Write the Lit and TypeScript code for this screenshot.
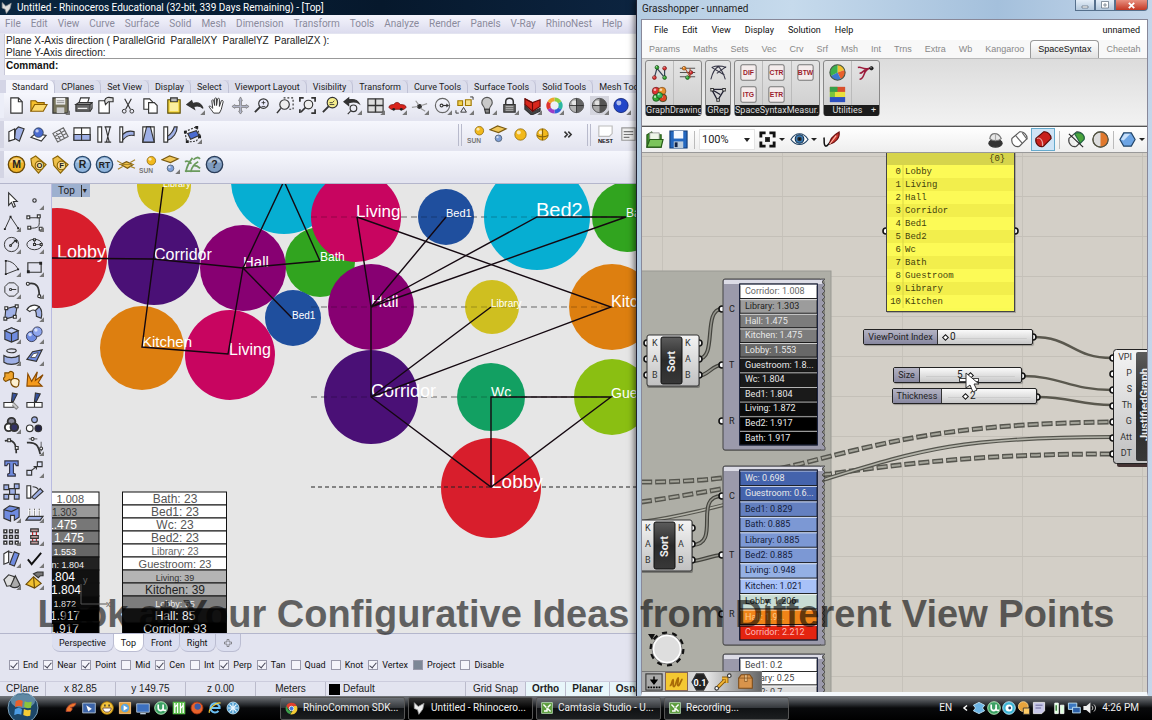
import { LitElement, html, svg, css } from "lit";
import { customElement } from "lit/decorators.js";
import { classMap } from "lit/directives/class-map.js";

/* ---------- shared pieces ---------- */

const shared = css`
  * { box-sizing: border-box; }
  button { font: inherit; color: inherit; background: none; border: 0; padding: 0; margin: 0; text-align: left; white-space: nowrap; }
  svg { display: block; }
  .ib { width: 22px; height: 22px; display: flex; align-items: center; justify-content: center; flex: none; }
`;

const icon = (body: unknown, size = 19) =>
  html`<svg viewBox="0 0 20 20" width=${size} height=${size} fill="none" stroke="#333" stroke-width="1.2" aria-hidden="true">${body}</svg>`;
const tool = (name: string, body: unknown, more = false) =>
  html`<button class="ib" aria-label=${name}>${icon(more ? svg`${body}<path d="M20 20h-5l5-5z" fill="#777" stroke="none"/>` : body)}</button>`;
const ball = (x: number, y: number, r: number, c: string, d: string) =>
  svg`<circle cx=${x} cy=${y} r=${r} fill=${c} stroke=${d} stroke-width=".8"/><circle cx=${x - r * 0.3} cy=${y - r * 0.35} r=${r * 0.35} fill="#fff" opacity=".65" stroke="none"/>`;

const BLUE = "#9fb0e6";
const sunIcon = svg`${ball(13, 6, 4.5, "#f2b91c", "#8a6508")}<text x="0" y="19" font-family="Liberation Sans" font-size="7" font-weight="bold" fill="#777" stroke="none">SUN</text>`;
const planeIcon = svg`<path d="M1 5l8-4 9 3-8 4z" fill="#f0c75a" stroke="#7a5a10"/>${ball(10, 14, 3.5, "#7f9fd8", "#456")}`;
const coin = (t: string, c: string, d: string) =>
  svg`<circle cx="10" cy="10" r="8.6" fill=${c} stroke=${d} stroke-width="1.4"/><path d="M3 8a7.500 7.500 0 0 1 14 0z" fill="#fff" opacity=".4" stroke="none"/><text x="10" y="14" text-anchor="middle" font-family="Liberation Sans" font-weight="bold" font-size=${t.length > 1 ? 9 : 11} fill="#222" stroke="none">${t}</text>`;
const tag = (t: string) =>
  svg`<path d="M2 4l5-3 11 9-8 9-7-8z" fill="#eec04a" stroke="#8a6508"/><circle cx="11" cy="11" r="4.500" fill="#f6dc92" stroke="#8a6508"/><text x="11" y="14" text-anchor="middle" font-family="Liberation Sans" font-weight="bold" font-size="8" fill="#222" stroke="none">${t}</text>`;
const lens = svg`<circle cx="11" cy="8" r="5" fill="#eef" /><path d="M7.500 11.500L2 17" stroke-width="2"/>`;

/* ---------- Rhinoceros ---------- */

const mainTools: [string, unknown, boolean?][] = [
  ["New", svg`<path d="M4 2h8l4 4v12H4z" fill="#fff"/><path d="M12 2v4h4"/>`],
  ["Open", svg`<path d="M2 16V5h5l2 2h7v3" fill="#f5c02c" stroke="#8a5e00"/><path d="M2 16l4-7h13l-4 7z" fill="#fbd96b" stroke="#8a5e00"/>`],
  ["Save", svg`<path d="M2 2h16v16H2z" fill="#77745c"/><path d="M5 2h10v7H5z" fill="#eee" stroke="none"/><path d="M6 12h8v6H6z" fill="#ccc" stroke="none"/><path d="M6 5h8M6 7h8" stroke="#777" stroke-width=".8"/>`, true],
  ["Print", svg`<path d="M5 8l2-6h9l-2 6z" fill="#fff"/><path d="M2 9h15v7H2z" fill="#666"/><path d="M2 9l3-2h14l-2 2zM17 16l2-3V7" fill="#aaa"/><path d="M4 13h10" stroke="#fff"/>`],
  ["Notes", svg`<path d="M3 5h11v13H3z" fill="#fff"/><path d="M9 5c1-4 4-4 9-3v4h-5l-3 3z" fill="#ddd"/>`],
  ["Cut", svg`<path d="M6 3l6 11M13 3L7 14"/><circle cx="5.500" cy="16" r="2" stroke-width="1"/><circle cx="13.500" cy="16" r="2" stroke-width="1"/>`],
  ["Copy", svg`<path d="M3 3h6l3 3v8H3z" fill="#fff"/><path d="M8 7h6l3 3v8H8z" fill="#fff"/>`],
  ["Paste", svg`<path d="M4 4h13v14H4z" fill="#f3d53c" stroke="#5c4c00"/><path d="M7 2h7v4H7z" fill="#bbb"/><path d="M6 7h9v9H6z" fill="#fbeea0" stroke="none"/>`],
  ["Undo", svg`<path d="M1 9l5-4 1 3c5-2 9 0 11 5-3-3-6-3-10-2l1 3z" fill="#333"/>`, true],
  ["Pan hand", svg`<path d="M6 18c-2-3-4-5-5-7 1-1 2 0 4 2L4 5c1-2 2-1 2 0l1 5V3c1-2 2-1 2 0v7l1-7c1-1 2-1 2 1v7l2-6c1-1 2 0 2 1l-2 8-2 4z" fill="#fff" stroke-width="1"/>`],
  ["Rotate view", svg`<path d="M10 1l2 4h-1v5h5V9l3 2-3 2v-1h-5v4h1l-2 3-2-3h1v-4H4v1l-3-2 3-2v1h5V5H8z" fill="#b4b8cc" stroke="#777" stroke-width=".8"/>`],
  ["Zoom dynamic", svg`${lens}<path d="M9 7h4M11 5v4M9 11h4" stroke-width=".9"/>`],
  ["Zoom window", svg`<path d="M8 2h10v12h-4" stroke-dasharray="2 2"/><circle cx="9" cy="9" r="5" fill="#eee"/><path d="M5 13l-4 5" stroke-width="1.600"/>`],
  ["Zoom extents", svg`<path d="M2 6V2h4M14 2h4v4M18 14v4h-4M2 14v4" stroke-width="1.800"/><circle cx="11" cy="9" r="4.500" fill="#eee"/><path d="M8 12l-5 5" stroke-width="1.600"/>`],
  ["Zoom selected", svg`<circle cx="12" cy="7" r="5.500" fill="#f6ee8c"/><path d="M9 7h3l2-2M9 9h5" stroke-width=".9"/><path d="M8 11l-6 6" stroke-width="2"/>`],
  ["Undo view", svg`<path d="M1 6l5-4v2c5-1 9 0 11 4-3-2-7-2-11-1v3z" fill="#333"/><circle cx="11" cy="13" r="3.500"/><path d="M8 16l-3 3"/>`, true],
  ["Four viewports", svg`<path d="M2 3h16v14H2z" fill="#ddd"/><path d="M10 3v14M2 10h16" stroke-width="1.500"/>`, true],
  ["Car", svg`<path d="M1 12c0-2 2-3 5-3 2-3 5-3 7 0 4 0 6 1 6 3l-2 2H3z" fill="#d8231c" stroke="#7a0c08" stroke-width=".8"/><circle cx="6" cy="14" r="1.500" fill="#222" stroke="none"/><circle cx="14" cy="14" r="1.500" fill="#222" stroke="none"/>`, true],
  ["Gumball", svg`<circle cx="10" cy="11" r="2" fill="#333"/><path d="M2 12l6-1M12 10l6-2M9 9L6 5M11 13l5 3" stroke="#999"/>`, true],
  ["Radius", svg`<circle cx="10" cy="10" r="7.500" stroke="#666"/><path d="M9 10h6" /><circle cx="9" cy="10" r="1.500" fill="#fff"/><path d="M14 8l3 2-3 2z" fill="#333" stroke="none"/>`, true],
  ["Selection", svg`<path d="M3 5h5v5H3z" fill="#f0cf4c" stroke="#a07800"/><path d="M11 4h6v6h-6z" fill="#f6e08c" stroke="#a07800"/><path d="M6 17l3-5 3 5zM16 1h3v3M1 15v3h3" stroke-width="1"/>`, true],
  ["Light bulb", svg`<path d="M7 14c0-3-3-4-3-7a5.500 5.500 0 0 1 11 0c0 3-3 4-3 7z" fill="#c9c9c9" stroke="#555"/><path d="M7 14h5v4H8z" fill="#888"/>`, true],
  ["Lock", svg`<path d="M6 9V6c0-5 8-5 8 0v3" stroke-width="1.600"/><path d="M4 9h12v8H4z" fill="#666"/><path d="M6 11h8M6 13h8M6 15h8" stroke="#ccc" stroke-width=".8"/>`, true],
  ["Layers", svg`<path d="M2 10l7 7 9-4v3l-9 4-7-6z" fill="#444"/><path d="M2 3l8 4 8-3v7l-8 5-8-7z" fill="#d8271c" stroke="#6a0a06"/><path d="M2 3l8 4v9" fill="none" stroke="#6a0a06"/>`, true],
  ["Colour wheel", svg`<g stroke-width="4"><path d="M10 3.500a6.500 6.500 0 0 1 5.600 3.200" stroke="#8fcf3c"/><path d="M15.600 6.700a6.500 6.500 0 0 1 0 6.600" stroke="#2cb8a0"/><path d="M15.600 13.300A6.500 6.500 0 0 1 10 16.500" stroke="#2f62d8"/><path d="M10 16.500a6.500 6.500 0 0 1-5.600-3.200" stroke="#9a3cc8"/><path d="M4.400 13.300a6.500 6.500 0 0 1 0-6.600" stroke="#e0342c"/><path d="M4.400 6.700A6.500 6.500 0 0 1 10 3.500" stroke="#f0a42c"/></g>`, true],
  ["Shaded", svg`${ball(10, 10, 7.5, "#b4b4b4", "#333")}<path d="M10 2.500a7.500 7.500 0 0 1 0 15z" fill="#666" stroke="none"/><path d="M2.500 10h15M10 2.500v15" stroke="#222" stroke-width=".8"/>`],
  ["Ghosted", svg`<path d="M0 0h20v20H0z" fill="#d4d5de" stroke="none"/>${ball(10, 10, 7.5, "#aaa", "#333")}<path d="M10 2.500a7.500 7.500 0 0 1 0 15z" fill="#555" stroke="none"/><path d="M2.500 10h15" stroke="#222" stroke-width=".8"/>`, true],
  ["Rendered", svg`${ball(9.5, 10, 7.5, "#2246c8", "#0b1c6a")}`, true],
];

const archTools: [string, unknown, boolean?][] = [
  ["Twist surface", svg`<path d="M2 7l6-3v11l-6 2z" fill="#fff"/><path d="M9 5l3-3 6 2-5 13-5-3z" fill=${BLUE}/>`],
  ["Sphere on plane", svg`<path d="M2 13l5-4 11 2-5 6z" fill="#fff"/>${ball(10, 8, 5, "#4a6bd0", "#234")}`],
  ["Mesh", svg`<path d="M2 9l11-6 5 9-11 6zM5 7l5 9M9 5l5 9M4 12l10-6M5 15l11-6" stroke="#666"/>`],
  ["Panels", svg`<path d="M1 3h17v13H1z" fill="#fff"/><path d="M1 10h17v6H1z" fill=${BLUE}/><path d="M1 10h17M9 3v13" />`],
  ["Column", svg`<path d="M3 2h4v16H3z" fill="#fff"/><path d="M10 2h7M10 18h7M11 2l4 16M16 2l-4 16"/>`],
  ["Bend", svg`<path d="M3 2h3v16H3z" fill="#fff"/><path d="M6 10c4-4 8-4 12-3v4c-5-1-8 0-12 5z" fill=${BLUE}/>`],
  ["Taper", svg`<path d="M4 2h12v16H4z" fill="#fff"/><path d="M4 18l4-16h4l4 16z" fill=${BLUE}/>`],
  ["Split", svg`<path d="M3 2h4v16H3z" fill="#fff"/><path d="M7 12c4-3 6-6 7-10h3c0 6-4 12-10 14z" fill=${BLUE}/>`],
  ["Cage edit", svg`<path d="M2 7l12-5 4 9-4 6-10 1z" stroke="#333" stroke-dasharray="2 1.500"/><path d="M5 9l9-3 3 5-9 4z" fill="#4a6bd0"/><path d="M1 6h3v3H1zM13 1h3v3h-3zM16 11h3v3h-3zM3 16h3v3H3z" fill="#222" stroke="none"/>`, true],
];

const renderTools: [string, unknown, boolean?][] = [
  ["Material editor", coin("M", "#f0b428", "#6a4a08")],
  ["Options", tag("O")],
  ["Frame buffer", tag("F")],
  ["Render", coin("R", "#8fb4dc", "#2c4a6c")],
  ["Render RT", coin("RT", "#8fb4dc", "#2c4a6c")],
  ["Infinite plane", svg`<path d="M4 10l6-3 7 3-6 4z" fill="#eec04a" stroke="#7a5a10"/><path d="M0 6l5 3M19 5l-5 3M1 15l5-3M19 14l-5-2M2 10h16" stroke="#a8862c"/>`],
  ["Sun", sunIcon],
  ["Rect light", planeIcon, true],
  ["Fur", svg`<path d="M3 18c1-7 3-10 7-15M8 18c1-5 4-9 8-11M9 9c-3-3-5-3-7-2M11 5c3-3 5-3 7-1M11 11c3 0 5 1 7 3M2 17h16" stroke="#6a9a5c" stroke-width="1.800"/>`],
  ["Help", coin("?", "#7f9cc0", "#2a3c58")],
];

const curveLine = svg`<path d="M3 4c10-2 12 4 12 13" stroke-width="1.800"/>`;
const sideTools: [string, unknown, boolean?][] = [
  ["Select", svg`<path d="M7 2v13l3-3 2 5 2-1-2-5h4z" fill="#fff"/>`],
  ["Point", svg`<circle cx="10" cy="10" r="1.800"/>`, true],
  ["Polyline", svg`<path d="M3 17L9 4l8 12" stroke-width="1"/><path d="M2 16h2v2H2zM8 3h2v2H8zM16 15h2v2h-2z" fill="#222" stroke="none"/>`, true],
  ["Control curve", svg`<path d="M4 5h11v5c0 5-2 6-10 6" stroke-width="1"/><path d="M2 3h3v3H2zM13 2h3v3h-3zM3 14h3v3H3zM15 15h3v3h-3z" fill="#fff"/>`, true],
  ["Circle", svg`<circle cx="10" cy="10" r="7.500" stroke-width="1"/><path d="M9 11l5-5"/><circle cx="9" cy="11" r="1" fill="#fff"/><path d="M12 5h4v4z" fill="#222" stroke="none"/>`, true],
  ["Ellipse", svg`<ellipse cx="10" cy="10" rx="8" ry="5.500" stroke-width="1"/><path d="M9 4h2v2H9zM16 9h2v2h-2zM9 9h2v2H9z" fill="#fff"/><path d="M10 6v3M11 10h5" stroke-width=".8"/>`, true],
  ["Arc", svg`<path d="M4 17V3c5 0 10 3 13 9z" stroke-width="1"/><path d="M3 2h2v2H3zM3 16h2v2H3zM16 11h2v2h-2z" fill="#222" stroke="none"/>`, true],
  ["Rectangle", svg`<path d="M3 5h14v10H3z"/><path d="M2 13h3v3H2zM15 4h3v3h-3z" fill="#222" stroke="none"/>`, true],
  ["Polygon", svg`<path d="M7 3h6l4 4v6l-4 4H7l-4-4V7z" stroke-width="1"/><path d="M10 10h5M8 9h2v2H8z" stroke-width="1"/>`, true],
  ["Fillet", svg`${curveLine}<circle cx="3" cy="4" r="1.600" fill="#fff"/><circle cx="15" cy="17" r="1.600" fill="#fff"/>`, true],
  ["Surface points", svg`<path d="M4 6l12-3-2 11-11 3z" fill=${BLUE}/><path d="M3 4h3v3H3zM14 2h3v3h-3zM12 13h3v3h-3zM2 15h3v3H2z" fill="#fff"/>`, true],
  ["Sweep", svg`<path d="M2 7c3-5 9-6 13-3l-4 4c-2-1-4-1-6 1z" fill="#fff"/><path d="M15 4c3 3 3 8 2 12l-5-2c0-2 0-4-1-6z" fill=${BLUE}/>`, true],
  ["Box", svg`<path d="M3 6l7-3 7 3v9l-7 3-7-3z" fill="#6f8be0"/><path d="M3 6l7 3 7-3-7-3z" fill="#c4d0f6"/><path d="M10 9v9"/>`, true],
  ["Union", svg`${ball(7, 12, 5.5, "#6f8be0", "#223")}${ball(13, 7, 5, "#8fa6ee", "#223")}`, true],
  ["Cylinder", svg`<path d="M2 9c4 3 12 3 16 0v7c-4 3-12 3-16 0z" fill=${BLUE}/><ellipse cx="10" cy="4" rx="5" ry="2"/>`, true],
  ["Extrude", svg`<path d="M2 13l6-8 10-2-6 12z" fill="#6f8be0"/><path d="M6 11l3-4 5-1-3 5z" fill="#fff" stroke-width=".8"/>`, true],
  ["Join", svg`<path d="M3 3h4c2-3 6-1 5 2v4c-2 3-4 1-4 1L4 12c-3-1-3-4-1-5z" fill="#f0a42c" stroke="#7a4a00"/><path d="M10 10c3-2 8-1 8 2-1 2 1 5-3 6-5 0-7-5-5-8z" fill="#fdf0d0" stroke="#7a4a00"/>`],
  ["Explode", svg`<path d="M2 17l1-13 4 8 6-10-2 9 8-6-5 8 4 4z" fill="#f59a1c" stroke="#8a4a00"/>`],
  ["Trim", svg`<path d="M2 11h10v5H2z" fill="#fff"/><path d="M12 11l5 5-2 2-4-4" fill="#ccc" stroke="#888"/><path d="M11 1l5 1-4 8h-2z" fill="#35519c"/>`],
  ["Split object", svg`<path d="M2 11h16v5H2zM10 11v5" fill="#fff"/><path d="M11 1l5 1-4 8h-2z" fill="#35519c"/>`],
  ["Group", svg`<circle cx="10" cy="7" r="4" stroke-width="2" fill="#889"/><circle cx="7" cy="13" r="4" stroke-width="2" fill="#fff"/><circle cx="13" cy="13" r="4" stroke-width="2" fill="#336"/>`, true],
  ["Ungroup", svg`<circle cx="10" cy="5" r="3" fill=${BLUE}/><circle cx="5" cy="14" r="3.500" fill="#fff"/><circle cx="14" cy="14" r="3.500" fill="#224"/>`],
  ["Points on", svg`${curveLine}<path d="M6 2h3v3H6zM14 10h3v3h-3z" fill="#fff"/>`],
  ["Edit points", svg`<path d="M2 6c10-1 12 3 14 12" stroke-width="1.800"/><path d="M4 2h9M17 5v10" stroke-width=".8"/><circle cx="8" cy="2" r="1.500" fill="#fff"/><circle cx="17" cy="12" r="1.500" fill="#fff"/>`, true],
  ["Text", svg`<path d="M3 2h14v5h-2l-1-2h-2v10l2 1v2H6v-2l2-1V5H6L5 7H3z" fill="#6f8be0" stroke="#334"/>`],
  ["Move", svg`<path d="M2 12h5v5H2zM13 3h5v5h-5z" fill="#dfe4f8"/><path d="M7 12l5-4M9 8h3v3"/>`, true],
  ["Copy objects", svg`<path d="M2 3h5v5H2zM13 2h5v5h-5zM8 7h6v6H8zM2 13h5v5H2zM13 13h5v5h-5z" fill=${BLUE}/>`],
  ["Rotate", svg`<path d="M2 4h4v13H2z" fill="#fff"/><path d="M7 16l9-9 3 3-9 8z" fill=${BLUE}/><path d="M8 5c3 0 5 1 6 3"/>`],
  ["Solid tools", svg`<path d="M2 6l6-4 10 2v10l-5 3v-5H9v6l-7-3z" fill="#6f8be0"/><path d="M2 6l8 2 8-4" />`, true],
  ["Align", svg`<path d="M1 17l3-4h15l-3 4z" fill=${BLUE}/><path d="M5 5v7M10 5v7M15 5v7" stroke="#fff" stroke-width="3"/><path d="M5 5v7M10 5v7M15 5v7" stroke-dasharray="1 1"/>`, true],
  ["Array", svg`<g fill="#fff" stroke-width="1.500"><path d="M2 3h3v3H2zM8 3h3v3H8zM14 3h3v3h-3zM2 9h3v3H2zM8 9h3v3H8zM14 9h3v3h-3zM2 15h3v3H2zM8 15h3v3H8zM14 15h3v3h-3z"/></g>`, true],
  ["Stack", svg`<path d="M8 5v10M12 5v10" stroke="#c22"/><path d="M6 2h8v3H6zM6 9h8v3H6zM6 15h8v3H6z" fill="#b99" />`, true],
  ["Boolean", svg`<path d="M2 5l5-3v12l-5 2z" fill="#fff"/><path d="M8 16l5-13 5 2-5 13z" fill="#6f8be0"/><path d="M7 3l4 1"/>`, true],
  ["Check", svg`<path d="M3 11l4 5L17 4" stroke="#111" stroke-width="2"/>`, true],
  ["Blend shapes", svg`<path d="M2 9l5-5 6 2-1 9-7 1z" fill="#ddd"/><path d="M9 16l5-11 5 10c-3 3-7 3-10 1z" fill="#aaa"/>`, true],
  ["Pyramid", svg`<path d="M1 14l8-8 8 7-7 5z" fill="#f0c030" stroke="#6a4a08"/><path d="M9 6l1 12" stroke="#6a4a08"/><path d="M9 3l4-2h6v4h-3l-2 2z" fill="#777"/>`, true],
];

type Bubble = [number, number, number, string];
const bubbles: Bubble[] = [
  [164, 186, 27, "#cfbf20"], [284, 181, 53, "#06aed2"], [57, 258, 50, "#d81e2c"],
  [154, 259, 46, "#4a1076"], [320, 262, 35, "#31a41f"], [243, 268, 43, "#870072"],
  [142, 348, 42, "#dd7f10"], [230, 355, 45, "#c80560"], [293, 318, 28, "#1f4f9e"],
  [356, 217, 45, "#c80560"], [446, 217, 28, "#1f4f9e"], [537, 217, 53, "#06aed2"],
  [627, 217, 35, "#31a41f"], [371, 307, 43, "#870072"], [492, 307, 27, "#cfbf20"],
  [612, 307, 43, "#dd7f10"], [371, 397, 47, "#4a1076"], [491, 397, 34, "#12a062"],
  [612, 397, 38, "#8abf12"], [491, 488, 50, "#d81e2c"],
];
const edges = [
  "M52 258L153 259L243 268L320 261", "M163 187L142 347L228 354L243 268L292 318",
  "M243 268L284 181L320 261", "M357 217L371 307V397L491 487L611 397H491V487",
  "M357 217L611 307L371 397L491 307", "M446 217L371 307L537 217H626L371 307",
];
const roomLabels: [string, number, number, number][] = [
  ["Library", 163, 187, 9], ["Lobby", 57, 258, 18], ["Corridor", 154, 260, 16], ["Hall", 243, 267, 15],
  ["Bath", 320, 261, 12], ["Bed1", 292, 319, 10], ["Kitchen", 142, 347, 15], ["Living", 229, 355, 16],
  ["Living", 356, 217, 17], ["Bed1", 446, 217, 11], ["Bed2", 536, 217, 20], ["Bath", 626, 217, 12],
  ["Hall", 371, 307, 16], ["Library", 491, 307, 10], ["Kitchen", 611, 307, 16],
  ["Corridor", 371, 397, 18], ["Wc", 491, 397, 14], ["Guestroom", 611, 398, 14], ["Lobby", 491, 488, 19],
];
const depthRows: [string, string, string, number, number][] = [
  ["1.008", "#fff", "#555", 11, 84], ["1.303", "#999", "#333", 10, 77], ["1.475", "#777", "#fff", 12, 77],
  ["1.475", "#777", "#fff", 12, 84], ["1.553", "#666", "#fff", 9, 76], ["n: 1.804", "#222", "#eee", 9, 84],
  ["1.804", "#111", "#fff", 12, 75], ["1.804", "#111", "#fff", 12, 81], ["1.872", "#090909", "#ddd", 9, 76],
  ["1.917", "#000", "#ddd", 12, 80], ["1.917", "#000", "#ddd", 12, 79],
];
const controlRows: [string, string, string, number][] = [
  ["Bath: 23", "#fff", "#555", 12], ["Bed1: 23", "#fff", "#555", 12], ["Wc: 23", "#fff", "#555", 12],
  ["Bed2: 23", "#fff", "#555", 12], ["Library: 23", "#fff", "#666", 10], ["Guestroom: 23", "#fff", "#555", 11],
  ["Living: 39", "#b4b4b4", "#333", 9], ["Kitchen: 39", "#b0b0b0", "#222", 12], ["Lobby: 55", "#7c7c7c", "#eee", 9],
  ["Hall: 85", "#111", "#eee", 12], ["Corridor: 93", "#000", "#ddd", 12],
];

@customElement("rhino-window")
class RhinoWindow extends LitElement {
  static styles = [shared, css`
    :host { display: flex; flex-direction: column; min-width: 0; overflow: hidden; background: #e3e4f0; color: #333; font: 10px/12px Roboto, "Liberation Sans", sans-serif; }
    .title { height: 15px; flex: none; background: linear-gradient(90deg, #0a2640, #06182c 60%, #0c2440); color: #fff; display: flex; align-items: center; gap: 4px; padding-left: 1px; white-space: nowrap; }
    .title h1 { font: 10px/14px Roboto, sans-serif; margin: 0; }
    nav { height: 18px; flex: none; display: flex; align-items: center; gap: 10px; padding-left: 5px; color: #8a8a9c; background: linear-gradient(#f4f4fc, #dcdcee); }
    .cmd { flex: none; margin: 1px 0 0 4px; border-left: 1px solid #c8c8d8; background: #fff; height: 41px; font: 10px/12px "Liberation Sans", sans-serif; color: #222; white-space: pre; display: flex; flex-direction: column; }
    .cmd p { margin: 0; padding-left: 1px; }
    .log { height: 25px; padding-top: 1px; border-bottom: 1px solid #999; }
    .prompt { display: flex; align-items: center; height: 14px; padding-left: 1px; gap: 4px; font-weight: bold; color: #111; }
    .prompt input { flex: 1; min-width: 0; border: 0; height: 12px; background: none; outline: none; }
    .tabs { flex: none; margin-top: 5px; height: 13px; display: flex; padding-left: 6px; font: 9px/14px Roboto, sans-serif; color: #222; background: #d4d5e6; }
    .tabs button { padding: 0 6px; border-right: 1px solid #c0c2d6; border-radius: 0 6px 0 0; background: #dcdeec; flex: none; }
    .tabs .on { background: #f4f5fc; }
    .bar { flex: none; display: flex; align-items: center; background: linear-gradient(#f6f7fd, #e4e5f0); border-left: 4px solid #d4d5e4; }
    .bar.main { justify-content: space-between; height: 25px; padding: 0 3px 0 1px; border-left-color: #eceef8; }
    .bar.low { padding: 0 0 0 1px; margin-top: 3px; height: 27px; }
    .set { display: flex; }
    .set.first { flex: 1; }
    .set.edge { border-left: 4px double #b8bacc; padding-left: 3px; }
    .set.mid { width: 129px; }
    .set.last { width: 49px; }
    .body { flex: 1; display: flex; min-height: 0; margin-top: 5px; border-top: 1px solid #b4b6cc; }
    .side { width: 52px; flex: none; padding: 5px 5px 0 0; border-right: 1px solid #b9bbe0; }
    .side div { display: grid; grid-template-columns: 23px 23px; grid-template-rows: repeat(18, 1fr); height: 403px; align-items: center; }
    .view { position: relative; flex: 1; min-width: 0; overflow: hidden; background: #e6e6e6; }
    .vname { position: absolute; left: 0; top: 0; height: 13px; display: flex; align-items: center; gap: 6px; padding: 0 2px 0 6px; background: #9db0cf; color: #222; }
    .vname i { border-left: 1px solid #333; padding: 0 1px; font: 8px/12px "DejaVu Sans", sans-serif; }
    .vtabs { flex: none; height: 19px; padding-left: 52px; display: flex; border-top: 1px solid #b4b6cc; color: #111; font: 9px/12px Roboto, sans-serif; }
    .vtabs button { height: 18px; padding: 0 7px; border-radius: 0 0 8px 8px; border-right: 1px solid #bbbdd2; border-bottom: 1px solid #bbbdd2; background: #dcdff0; }
    .vtabs .on { background: #fff; }
    .osnap { flex: none; height: 29px; display: flex; align-items: center; gap: 5px; padding: 0 0 4px 9px; color: #111; white-space: nowrap; font: 9px/12px Roboto, sans-serif; }
    label { display: flex; align-items: center; gap: 4px; }
    input[type="checkbox"] { appearance: none; width: 10px; height: 10px; margin: 0; border: 1px solid #99a; background: #f4f4fa; display: grid; place-items: center; }
    input[type="checkbox"]:checked::after { content: ""; width: 3px; height: 6px; border: solid #445; border-width: 0 1px 1px 0; rotate: 40deg; }
    .filled input { background: #7d8796; }
    .status { flex: none; height: 15px; display: flex; font: 10px/14px "Liberation Sans", sans-serif; color: #222; white-space: nowrap; border-top: 1px solid #ccd; }
    .status > * { border-right: 1px solid #bbc; text-align: center; flex: none; width: 70px; }
    .status .cp { width: 46px; }
    .status .layer { width: 140px; display: flex; gap: 3px; align-items: center; padding-left: 3px; }
    .status .layer::before { content: ""; width: 11px; height: 11px; background: #000; }
    .status .gs { width: 60px; }
    .status .b { width: auto; padding: 0 6px; font-weight: bold; background: #e8f6fa; }
  `];

  render() {
    const menus = "File Edit View Curve Surface Solid Mesh Dimension Transform Tools Analyze Render Panels V-Ray RhinoNest Help".split(" ");
    const tabs = ["Standard", "CPlanes", "Set View", "Display", "Select", "Viewport Layout", "Visibility", "Transform", "Curve Tools", "Surface Tools", "Solid Tools", "Mesh Tools"];
    const snaps: [string, boolean][] = [["End", true], ["Near", true], ["Point", true], ["Mid", false], ["Cen", true], ["Int", false], ["Perp", true], ["Tan", true], ["Quad", false], ["Knot", false], ["Vertex", true], ["Project", false], ["Disable", false]];
    return html`
      <header class="title">
        ${icon(svg`<path d="M2 1l6 6 9-5-2 9-6 8-2-7-5-2z" fill="#ddd" stroke="#999"/>`, 12)}
        <h1>Untitled - Rhinoceros Educational (32-bit, 339 Days Remaining) - [Top]</h1>
      </header>
      <nav>${menus.map((m) => html`<button>${m}</button>`)}</nav>
      <div class="cmd">
        <div class="log"><p>Plane X-Axis direction ( ParallelGrid  ParallelXY  ParallelYZ  ParallelZX ):</p><p>Plane Y-Axis direction:</p></div>
        <label class="prompt">Command:<input type="text" /></label>
      </div>
      <div class="tabs">${tabs.map((t, i) => html`<button class=${classMap({ on: i === 0 })}>${t}</button>`)}</div>
      <div class="bar main">${mainTools.map((t) => tool(...t))}</div>
      <div class="bar low">
        <div class="set first">${archTools.map((t) => tool(...t))}</div>
        <div class="set edge mid">
          ${tool("Sun light", sunIcon)}${tool("Plane light", planeIcon)}
          ${tool("Sphere light", ball(10, 10, 6, "#f2b91c", "#8a6508"))}
          ${tool("Dome light", svg`${ball(10, 10, 6, "#f2b91c", "#8a6508")}<path d="M4 11c4 2 8 2 12 0M10 4v12" stroke="#8a6508"/>`)}
          ${tool("More", svg`<path d="M10 7l3 3-3 3M14 7l3 3-3 3" stroke-width="1.600"/>`)}
        </div>
        <div class="set edge last">
          ${tool("Nest", svg`<path d="M3 1h14v8l-3 3H3z" fill="#fff" stroke="#bbb"/><text x="2" y="19" font-family="Liberation Sans" font-size="6" font-weight="bold" fill="#111" stroke="none">NEST</text>`)}
          ${tool("Nest report", svg`<path d="M4 3h14v13H4z" fill="#eee" stroke="#999"/><path d="M6 7h10M6 10h10M6 13h6" stroke="#777"/>`)}
        </div>
      </div>
      <div class="bar low">${renderTools.map((t) => tool(...t))}</div>
      <div class="body">
        <div class="side"><div>${sideTools.map((t) => tool(...t))}</div></div>
        <div class="view">${this.drawing()}<button class="vname">Top<i>▾</i></button></div>
      </div>
      <div class="vtabs">${["Perspective", "Top", "Front", "Right"].map((t) => html`<button class=${classMap({ on: t === "Top" })}>${t}</button>`)}<button aria-label="New viewport">${icon(svg`<path d="M8 3h4v5h5v4h-5v5H8v-5H3V8h5z" stroke="#555"/>`, 10)}</button></div>
      <div class="osnap">${snaps.map(([n, on]) => html`<label class=${classMap({ filled: n === "Project" })}><input type="checkbox" ?checked=${on} />${n}</label>`)}</div>
      <footer class="status">
        <span class="cp">CPlane</span><span>x 82.85</span><span>y 149.75</span><span>z 0.00</span><span>Meters</span>
        <span class="layer">Default</span><button class="gs">Grid Snap</button><button class="b">Ortho</button><button class="b">Planar</button><button class="b">Osnap</button>
      </footer>`;
  }

  drawing() {
    return html`<svg width="100%" height="100%" font-family="Liberation Sans, sans-serif"><g transform="translate(-52 -184)">
      <path d="M311 217H640M311 307H640M311 397H640" stroke="#999" stroke-dasharray="6 4"/>
      ${bubbles.map(([x, y, r, c]) => svg`<circle cx=${x} cy=${y} r=${r} fill=${c}/>`)}
      <path d="M311 217H640M311 307H640M311 397H640" stroke="#000" opacity=".25" stroke-dasharray="6 4"/>
      <path d="M311 487H640" stroke="#222" stroke-dasharray="4 3"/>
      ${roomLabels.map(([t, x, y, s]) => svg`<text x=${x} y=${y} font-size=${s} fill="#fff">${t}</text>`)}
      <g fill="none" stroke="#140810" stroke-width="1.400">${edges.map((d) => svg`<path d=${d}/>`)}</g>
      ${depthRows.map(([t, bg, fg, s, x], i) => svg`<rect x="40" y=${492 + 13 * i} width="59" height="13" fill=${bg} stroke="#111"/><text x=${x} y=${503 + 13 * i} font-size=${s} fill=${fg} text-anchor="end">${t}</text>`)}
      ${controlRows.map(([t, bg, fg, s], i) => svg`<rect x="122.500" y=${492 + 13 * i} width="104" height="13" fill=${bg} stroke="#111"/><text x="175" y=${503 + 13 * i} font-size=${s} fill=${fg} text-anchor="middle">${t}</text>`)}
      <path d="M81 584V604H107" fill="none" stroke="#555" /><text x="83" y="583" font-size="9" fill="#666">y</text><text x="106" y="607" font-size="9" fill="#666">x</text>
    </g></svg>`;
  }
}

/* ---------- Grasshopper ---------- */

const badge = (t: string) => svg`<rect x="1" y="1" width="18" height="18" rx="2" fill="#f4ecec" stroke="#777"/><text x="10" y="13" text-anchor="middle" font-family="Liberation Sans" font-weight="bold" font-size="8" fill="#9c1c2c" stroke="none">${t}</text>`;
const groups: { name: string; cls: string; cols: [string, unknown][][] }[] = [
  { name: "GraphDrawing", cls: "g2", cols: [
    [["Graph", svg`<path d="M4 16L7 5l9 11V5" stroke="#345" stroke-width="1.400"/>${ball(4, 16, 2.2, "#d33", "#611")}${ball(7, 4, 2.2, "#3a3", "#141")}${ball(16, 16, 2.2, "#3a3", "#141")}${ball(16, 5, 2.2, "#d33", "#611")}`],
     ["Bubbles", svg`${ball(6, 6, 4.5, "#d33", "#611")}${ball(13, 6, 4.5, "#e8902c", "#741")}${ball(6, 14, 4, "#3a3", "#141")}${ball(14, 14, 4.5, "#d42", "#141")}${ball(10, 11, 3.5, "#3b5", "#141")}`]],
    [["Justified", svg`<path d="M1 5h18M1 10h18M1 15h18" stroke="#555"/><path d="M7 5l6 10V5" stroke="#a42"/>${ball(6, 5, 2.2, "#e82", "#741")}${ball(14, 10, 2.2, "#d33", "#611")}${ball(10, 16, 2.2, "#3a3", "#141")}`]],
  ] },
  { name: "GRep", cls: "g1", cols: [[["Arcs", svg`<path d="M1 18C3 10 6 5 10 3c4 4 6 8 8 15M2 4c5-2 11-2 17 0M2 4l15 9M19 3L8 11" stroke="#334"/>`], ["Loop", svg`<path d="M2 4h15L9 17 2 4l10 6" stroke="#223" stroke-width="1.500"/><path d="M1 3h3v3H1zM15 3h3v3h-3zM8 15h3v3H8z" fill="#fff"/>`]]] },
  { name: "SpaceSyntaxMeasur...", cls: "g3", cols: [[["DIF", badge("DIF")], ["ITG", badge("ITG")]], [["CTR", badge("CTR")], ["ETR", badge("ETR")]], [["BTW", badge("BTW")]]] },
  { name: "Utilities", cls: "g2", cols: [
    [["Pie", svg`<g stroke="none"><path d="M10 10V1a9 9 0 0 1 8.500 6z" fill="#f0c030"/><path d="M10 10l8.500-3A9 9 0 0 1 14 18z" fill="#e8602c"/><path d="M10 10l4 8a9 9 0 0 1-12-4z" fill="#3c78d0"/><path d="M10 10l-8 4A9 9 0 0 1 10 1z" fill="#3cb04c"/></g><circle cx="10" cy="10" r="9" stroke="#454"/>`],
     ["Gradient", svg`<g stroke="none"><path d="M1 1h18v6H1z" fill="#d8502c"/><path d="M1 1h9v6H1z" fill="#38a048"/><path d="M1 7h18v6H1z" fill="#e8e03c"/><path d="M1 7h6v6H1z" fill="#7cc43c"/><path d="M1 13h18v6H1z" fill="#2c50c0"/></g>`]],
    [["Merge", svg`<path d="M1 4c6-1 4 3 15 1M3 11c5 0 4-6 13-6M3 18c7 0 3-12 13-13" stroke="#9c1c3c" stroke-width="1.800"/>${ball(17, 5, 2, "#222", "#000")}`]],
  ] },
];

type Row = [string, string, string];
const w = "#e8e8e8";
const integration: Row[] = [
  ["Corridor: 1.008", "#fff", "#666"], ["Library: 1.303", "#9c9c9c", "#222"], ["Hall: 1.475", "#7c7c7c", w], ["Kitchen: 1.475", "#7c7c7c", w],
  ["Lobby: 1.553", "#686868", w], ["Guestroom: 1.8...", "#1a1a1a", w], ["Wc: 1.804", "#1a1a1a", w], ["Bed1: 1.804", "#1a1a1a", w],
  ["Living: 1.872", "#0c0c0c", w], ["Bed2: 1.917", "#000", w], ["Bath: 1.917", "#000", w],
];
const choice: Row[] = [
  ["Wc: 0.698", "#4463ac", w], ["Guestroom: 0.6...", "#4463ac", w], ["Bed1: 0.829", "#6480c0", "#14203c"], ["Bath: 0.885", "#7c98d4", "#14203c"],
  ["Library: 0.885", "#7c98d4", "#14203c"], ["Bed2: 0.885", "#7c98d4", "#14203c"], ["Living: 0.948", "#94b0e4", "#14203c"], ["Kitchen: 1.021", "#a8c2f8", "#14203c"],
  ["Lobby: 1.206", "#c8dcd4", "#222"], ["Hall: 1.9...", "#f08418", "#fc8"], ["Corridor: 2.212", "#e42410", "#fbb"],
];
const entropy: Row[] = [["Bed1: 0.2", "#fff", "#444"], ["Library: 0.25", "#fff", "#444"], ["Bed2: 0.7", "#ddd", "#444"], ["Hall: 0.9", "#ccc", "#444"]];

const port = (x: number, y: number) => svg`<circle cx=${x} cy=${y} r="3" fill="#fff" stroke="#111" stroke-width="1.600"/>`;
const zigzag = (y: number, h: number) => {
  let d = `M821 ${y}H825`;
  for (let i = 0; i < Math.floor(h / 6); i++) d += "l-3 3l3 3";
  return `${d}V${y + h}H821`;
};
const gradientNode = (y: number, h: number, top: number, bottom: number, rows: Row[], ports: [string, number][]) => {
  const step = (bottom - top) / rows.length;
  return svg`
    <rect x="723" y=${y + 1} width="102" height=${h} rx="3" fill="#000" opacity=".25"/>
    ${ports.map(([, py]) => port(722, py))}
    <rect x="723" y=${y} width="99" height=${h} rx="2" fill="#9b9aab" stroke="#444"/>
    <path d=${zigzag(y, h)} fill="#9b9aab" stroke="#555"/>
    <rect x="724" y=${y + 1} width="98" height="4" fill="#dcdce6"/>
    ${rows.map(([t, bg, fg], i) => svg`<rect x="740" y=${top + step * i} width="77" height=${step} fill=${bg} stroke="#111" stroke-width=".8"/><path d=${`M740 ${top + step * i + 1}h77`} stroke="#fff" opacity=".7"/><text x="745" y=${top + step * (i + 0.5) + 3} fill=${fg}>${t}</text>`)}
    <rect x="739.500" y=${top} width="78" height=${bottom - top} fill="none" stroke="#1c2440"/>
    ${ports.map(([t, py]) => svg`<text x="729" y=${py + 3} fill="#222">${t}</text>`)}`;
};
const sortNode = (x: number, y: number) => svg`
  <rect x=${x} y=${y + 1} width="53" height="52" rx="2" fill="#000" opacity=".3"/>
  <g>${[8, 24, 40].map((d) => svg`${port(x, y + d)}${port(x + 52, y + d)}`)}</g>
  <rect x=${x} y=${y} width="52" height="51" rx="2" fill="url(#metal)" stroke="#333"/>
  <rect x=${x + 14} y=${y + 2} width="21" height="47" rx="2" fill="url(#coal)" stroke="#111"/>
  ${["K", "A", "B"].map((t, i) => svg`<text x=${x + 5} y=${y + 11 + 16 * i} fill="#333">${t}</text><text x=${x + 38} y=${y + 11 + 16 * i} fill="#333">${t}</text>`)}
  <text transform=${`translate(${x + 28} ${y + 37}) rotate(-90)`} font-size="11" font-weight="bold" fill="#eee">Sort</text>`;

const sliders = [
  { label: "ViewPoint Index", x: 863, y: 329, width: 170, name: 74, value: 0, max: 10, text: 12 },
  { label: "Size", x: 893, y: 367, width: 129, name: 26, value: 5, max: 10, text: 37 },
  { label: "Thickness", x: 892, y: 388, width: 145, name: 49, value: 2, max: 10, text: 28 },
];

@customElement("grasshopper-window")
class GrasshopperWindow extends LitElement {
  static styles = [shared, css`
    :host { display: flex; flex-direction: column; background: linear-gradient(90deg, #b4cce2, #c6daec 30%, #a4c0dc 70%, #c4d6ea); border-left: 1px solid #223; box-shadow: -2px 0 6px #0008; z-index: 1; padding: 0 4px; color: #222; font: 9px/12px Roboto, "Liberation Sans", sans-serif; min-width: 0; }
    .title { flex: none; height: 19px; display: flex; justify-content: space-between; padding-left: 1px; }
    h1 { font: 10px/18px Roboto, sans-serif; margin: 0; }
    .wb { display: flex; height: 11px; }
    .wb button { width: 20px; border: 1px solid #56708c; border-top: 0; background: linear-gradient(#e4eef8, #b4c8dc); display: grid; place-items: center; }
    .wb button:last-child { width: 33px; background: linear-gradient(#e89080, #c43824); border-radius: 0 0 4px 0; }
    .win { flex: 1; min-height: 0; display: flex; flex-direction: column; background: #f6f6f6; border: 1px solid #889; border-bottom: 4px solid #f4f8fc; }
    nav { flex: none; height: 20px; display: flex; align-items: center; gap: 14px; padding: 0 7px 0 12px; background: #fff; color: #111; }
    nav span { margin-left: auto; }
    .tabs { flex: none; height: 18px; display: flex; align-items: end; color: #888; background: #f8f8f8; font: 9px/17px "Liberation Sans", sans-serif; }
    .tabs button { padding: 0 6px 0 7px; height: 17px; }
    .tabs .on { background: linear-gradient(#fff, #e2e2e2); border: 1px solid #999; border-bottom: 0; border-radius: 4px 4px 0 0; color: #111; height: 18px; padding: 0 7px; }
    .ribbon { flex: none; height: 68px; background: linear-gradient(#dcdcdc, #f2f2f2); display: flex; gap: 3px; padding: 1px 3px 9px; border: 1px solid #bbb; border-width: 1px 0; }
    .group { border: 1px solid #888; border-radius: 3px; background: linear-gradient(#e4e4e4, #ccc); display: flex; flex-direction: column; }
    .g1 { width: 26px; } .g2 { width: 57px; } .g3 { width: 86px; }
    .cols { flex: 1; display: flex; }
    .cols > div { flex: 1; display: flex; flex-direction: column; align-items: center; }
    .cols > div + div { border-left: 1px solid #bbb; }
    .group b { flex: none; height: 11px; background: #1c1c1c; color: #ddd; font: 9px/11px Roboto, sans-serif; text-align: center; white-space: nowrap; border-radius: 0 0 2px 2px; overflow: hidden; }
    .group i { float: right; font-style: normal; padding-right: 3px; }
    .bar { flex: none; height: 27px; display: flex; align-items: center; background: linear-gradient(#fff, #eee); border-top: 1px solid #555; border-bottom: 1px solid #999; }
    .bar .ib { width: 24px; }
    .bar .gap { flex: 1; }
    .sep { width: 1px; height: 18px; background: #bbb; margin: 0 4px; }
    .sep.tight { margin: 0 1px; }
    select { appearance: none; width: 56px; height: 21px; border: 1px solid #e4e4e4; background: #fff; font: 11px/18px Roboto, sans-serif; padding: 0 0 0 2px; color: #222; border-radius: 0; }
    .combo { position: relative; display: flex; }
    .combo::after { content: ""; position: absolute; right: 5px; top: 9px; border: 3px solid transparent; border-top: 4px solid #222; border-bottom: 0; }
    .tri { border: 3px solid transparent; border-top: 3px solid #222; border-bottom: 0; margin-right: 2px; }
    .shown { width: 24px; height: 23px; display: flex; align-items: center; justify-content: center; border: 1px solid #6ac; background: #cfe4f6; }
    .canvas { position: relative; flex: 1; min-height: 0; overflow: hidden; background-color: #d3cfc7; background-image: linear-gradient(#c4c0b8 1px, transparent 1px), linear-gradient(90deg, #c6c2ba 1px, transparent 1px); background-size: 40px 40px, 120px 40px; background-position: 0 3px, 20px 0; }
    .canvas > svg { position: absolute; inset: 0; }
    .slider { position: absolute; height: 16px; display: flex; border: 1px solid #222; border-radius: 2px; background: linear-gradient(#fafafa, #c8c8c8); box-shadow: 1px 1px 1px #0004; }
    .slider label { background: linear-gradient(#b4b4c4, #8888a0); border-right: 1px solid #333; text-align: center; line-height: 14px; color: #222; white-space: nowrap; flex: none; }
    .track { position: relative; flex: 1; padding: 0 5px; background: linear-gradient(#ccc, #ccc) 50% 60% / 88% 1px no-repeat; }
    .track input { appearance: none; background: none; width: 100%; height: 14px; margin: 0; padding: 0; display: block; }
    .track input::-webkit-slider-thumb { appearance: none; width: 5px; height: 5px; border: 1px solid #111; background: #fff; rotate: 45deg; }
    output { position: absolute; top: 1px; line-height: 12px; font-size: 10px; }
    .dock { position: absolute; left: 0; bottom: 0; height: 21px; width: 120px; display: flex; align-items: center; border: 1px solid #777; border-left: 0; background: linear-gradient(90deg, #aaa, #e4e4e4 55%, #666); }
    .dock button { width: 23px; display: grid; place-items: center; height: 19px; }
    .dock .on { background: #f4c832; border: 1px solid #865; }
  `];

  render() {
    const tabs = "Params Maths Sets Vec Crv Srf Msh Int Trns Extra Wb Kangaroo SpaceSyntax Cheetah".split(" ");
    const cyl = (c: string, d: string) => svg`<path d="M2 9l8-7c4-1 8 3 8 7l-8 8c-5 2-9-3-8-8z" fill=${c} stroke=${d}/><path d="M3 9c3-2 7 2 6 8" stroke="#fff" opacity=".6"/>`;
    return html`
      <header class="title"><h1>Grasshopper - unnamed</h1>
        <div class="wb">
          <button aria-label="Minimize">${icon(svg`<path d="M4 12h12v4H4z" fill="#fff" stroke="#456"/>`, 10)}</button>
          <button aria-label="Maximize">${icon(svg`<path d="M3 3h14v13H3z" fill="#fff" stroke="#456"/><path d="M8 8h4v4H8z" stroke="#456"/>`, 10)}</button>
          <button aria-label="Close">${icon(svg`<path d="M4 4l12 12M16 4L4 16" stroke="#fff" stroke-width="4"/>`, 9)}</button>
        </div></header>
      <div class="win">
        <nav>${["File", "Edit", "View", "Display", "Solution", "Help"].map((m) => html`<button>${m}</button>`)}<span>unnamed</span></nav>
        <div class="tabs">${tabs.map((t) => html`<button class=${classMap({ on: t === "SpaceSyntax" })}>${t}</button>`)}</div>
        <div class="ribbon">${groups.map((g) => html`<div class="group ${g.cls}"><div class="cols">${g.cols.map((c) => html`<div>${c.map(([n, b]) => html`<button class="ib" aria-label=${n}>${icon(b, 17)}</button>`)}</div>`)}</div><b>${g.name === "Utilities" ? html`<i>+</i>` : ""}${g.name}</b></div>`)}</div>
        <div class="bar">
          ${tool("Open", svg`<path d="M2 18V5l5-3 2 3h8v13z" fill="#3f8f2c" stroke="#265a18"/><path d="M5 3h10v10H5z" fill="#eef6e8" stroke="#888" stroke-width=".8"/><path d="M2 18l3-8h14l-2 8z" fill="#7cc45c" stroke="#265a18"/>`)}
          ${tool("Save", svg`<path d="M1 1h18v18H1z" fill="#2468c0" stroke="#123c78"/><path d="M5 1h10v8H5z" fill="#f4f8ff" stroke="none"/><path d="M5 12h10v7H5z" fill="#bcd" stroke="none"/><path d="M6 13h3v5H6z" fill="#124" stroke="none"/>`)}
          <span class="sep"></span>
          <span class="combo"><select aria-label="Zoom"><option>100%</option></select></span>
          ${tool("Zoom extents", svg`<path d="M3 8V3h5M12 3h5v5M17 12v5h-5M8 17H3v-5" stroke="#111" stroke-width="3"/><path d="M8 8h4v4H8z" fill="#111"/>`)}<span class="tri"></span>
          ${tool("Named views", svg`<path d="M1 10c5-8 13-8 18 0-5 7-13 7-18 0z" fill="#fff" stroke="#246"/><circle cx="10" cy="9.500" r="4.500" fill="#3c7cb4" stroke="#135"/><circle cx="10" cy="9.500" r="1.800" fill="#012"/>`)}<span class="tri"></span>
          ${tool("Sketch", svg`<path d="M2 8c1 3-1 8 2 9 3 0 3-4 5-4" stroke="#111" stroke-width="1.600"/><path d="M8 15c0-5 3-9 10-13 1 6-3 11-10 13z" fill="#c8342c" stroke="#611"/><path d="M8 15l7-9" stroke="#fba"/>`)}
          <span class="gap"></span>
          ${tool("No preview", svg`<ellipse cx="10" cy="14" rx="7" ry="4" fill="#333"/><path d="M4 9c1-7 9-7 12 0-3 3-9 3-12 0z" fill="#e8e8e8" stroke="#777"/><path d="M10 4v7" stroke="#aaa"/>`)}
          ${tool("Wireframe", svg`${cyl("#fff", "#555")}<path d="M6 6l7 8M13 3l5 7" stroke="#666"/>`)}
          <span class="shown">${tool("Shaded", cyl("#c8201c", "#5c0806"))}</span>
          <span class="sep"></span>
          ${tool("Selected", svg`${cyl("#eee", "#444")}<path d="M8 4c5-3 11 0 10 6l-4 4z" fill="#4aa43c" stroke="#264"/><path d="M2 4l15 14" stroke="#222"/>`)}
          ${tool("Document", svg`<circle cx="10" cy="10" r="8" fill="#ddd" stroke="#554"/><path d="M10 2a8 8 0 0 1 0 16z" fill="#e0782c" stroke="none"/><circle cx="10" cy="10" r="8" stroke="#554"/>`)}
          <span class="sep tight"></span>
          ${tool("Quality", svg`<path d="M6 3h8l4 7-4 7H6l-4-7z" fill="#6ca4e4" stroke="#246"/><path d="M7 4h6l-7 7-3-1z" fill="#c8e0fa" stroke="none"/>`)}<span class="tri"></span>
        </div>
        <div class="canvas">
          ${this.graph()}
          ${sliders.map((s, i) => html`<div class="slider" style="left:${s.x - 642}px;top:${s.y - 153}px;width:${s.width}px">
            <label for="s${i}" style="width:${s.name}px">${s.label}</label>
            <div class="track"><input id="s${i}" type="range" min="0" max=${s.max} .value=${String(s.value)} /><output for="s${i}" style="left:${s.text}px">${s.value}</output></div></div>`)}
          ${this.overlays()}
          <div class="dock">
            <button aria-label="Dock">${icon(svg`<rect x="1" y="1" width="18" height="18" fill="#aaa"/><path d="M10 4v6M7 8l3 4 3-4z" stroke="#000" fill="#000" stroke-width="1.600"/><path d="M3 16h14" stroke="#000" stroke-width="2" stroke-dasharray="2 1"/>`, 18)}</button>
            <button class="on" aria-label="Draw wires">${icon(svg`<path d="M2 15c3 0 2-6 4-7 1 2-1 8 1 8s3-9 5-10c1 2-2 9 0 9s3-7 5-8" stroke="#a86a08" stroke-width="2"/>`, 17)}</button>
            <button aria-label="Precision">${icon(svg`<path d="M6 1h8l5 9-5 9H6l-5-9z" fill="#222"/><text x="10" y="14" font-size="10" font-weight="bold" text-anchor="middle" fill="#fff" stroke="none">0.1</text>`, 18)}</button>
            <button aria-label="Connect">${icon(svg`<path d="M4 16L12 8M9 6h5v5" stroke="#8a5a08" stroke-width="4"/><path d="M4 16L12 8M9 6h5v5" stroke="#f4b838" stroke-width="2"/><circle cx="17" cy="3" r="2" fill="#fff"/><circle cx="3" cy="17" r="2" fill="#fff"/>`, 18)}</button>
            <button aria-label="Package">${icon(svg`<path d="M2 6l3-4h10l3 4v12H2z" fill="#d8944c" stroke="#7a4a18"/><path d="M2 6h16M9 2h3v8H9z" fill="#f0c890" stroke="#7a4a18" stroke-width=".8"/>`, 17)}</button>
          </div>
        </div>
      </div>`;
  }

  graph() {
    const wires = ["M698 359C718 359 702 309 722 309", "M698 376C708 376 712 365 722 365", "M692 545C722 545 692 496 722 496", "M692 561C702 561 712 555 722 555"];
    const dashed = ["M641 482C700 482 740 478 800 464C900 438 960 424 1112 422", "M641 502C700 494 760 480 830 474C940 458 1020 454 1112 454"];
    const pair = "M641 522C700 514 760 494 826 479C920 450 960 437 1112 437";
    const labels = ["VPI", "P", "S", "Th", "G", "Att", "DT"];
    const names = ["Lobby", "Living", "Hall", "Corridor", "Bed1", "Bed2", "Wc", "Bath", "Guestroom", "Library", "Kitchen"];
    return html`<svg width="100%" height="100%" font-size="9" fill="none">
      <defs>
        <linearGradient id="metal" x2="0" y2="1"><stop stop-color="#f4f4f4"/><stop offset="1" stop-color="#c0c0c0"/></linearGradient>
        <linearGradient id="coal" x2="0" y2="1"><stop stop-color="#5c5c5c"/><stop offset=".5" stop-color="#2a2a2a"/><stop offset="1" stop-color="#383838"/></linearGradient>
      </defs>
      <g transform="translate(-642 -153)">
        <rect x="630" y="271" width="201" height="440" fill="#aeaea6" stroke="#9a9a94"/>
        ${dashed.map((d) => svg`<path d=${d} stroke="#55554e" stroke-width="5" stroke-dasharray="11 3"/><path d=${d} stroke="#a4a49a" stroke-width="2" stroke-dasharray="9 5" stroke-dashoffset="-1"/>`)}
        <path d=${pair} stroke="#55554e" stroke-width="4"/><path d=${pair} stroke="#b4b4aa" stroke-width="1.600"/>
        ${wires.map((d) => svg`<path d=${d} stroke="#44443e" stroke-width="4"/><path d=${d} stroke="#94948c" stroke-width="1.600"/>`)}
        <g stroke="#5a584e" stroke-width="2.400"><path d="M1033 337C1072 337 1072 358 1112 358"/><path d="M1023 376C1060 376 1070 390 1112 390"/><path d="M1038 397C1070 397 1080 405 1112 405"/></g>
        ${gradientNode(279, 171, 284, 445, integration, [["C", 309], ["T", 365], ["R", 421]])}
        ${gradientNode(466, 179, 470, 640, choice, [["C", 496], ["T", 555], ["R", 614]])}
        ${gradientNode(654, 60, 658, 712, entropy, [])}
        ${sortNode(647, 335)}${sortNode(640, 520)}
        ${port(886, 231)}${port(1015, 231)}
        <rect x="887" y="140" width="129" height="173" fill="#000" opacity=".2"/>
        <rect x="886.500" y="140.500" width="128" height="171" fill="#fafa54" stroke="#444"/><rect x="887" y="150" width="127" height="15" fill="#d6d44c"/>
        ${names.map((n, i) => svg`<rect x="887" y=${165 + 13 * i} width="127" height="13" fill=${i % 2 ? "#f2ee4c" : "#fcfa56"}/><g font-family="Liberation Mono, monospace" fill="#44420c"><text x="901" y=${174 + 13 * i} text-anchor="end">${i}</text><text x="905" y=${174 + 13 * i}>${n}</text></g>`)}
        <path d="M903 165V308" stroke="#d8d444"/>
        <text x="989" y="161" font-family="Liberation Mono, monospace" fill="#44420c">{0}</text>
        ${port(1033, 337)}${port(1022, 376)}${port(1037, 397)}
        ${labels.map((_, i) => port(1113, 358 + 16 * i))}
        <rect x="1117" y="462" width="50" height="5" rx="2" fill="#433"/>
        <rect x="1113.500" y="349.500" width="60" height="114" rx="3" fill="url(#metal)" stroke="#222"/>
        <rect x="1136" y="352" width="36" height="109" rx="2" fill="url(#coal)"/>
        ${labels.map((t, i) => svg`<text x="1132" y=${360 + 16 * i} text-anchor="end" fill="#333">${t}</text>`)}
        <text transform="translate(1148 441) rotate(-90)" font-size="11" font-weight="bold" fill="#eee">JustifiedGraph</text>
      </g></svg>`;
  }

  overlays() {
    return html`<svg width="100%" height="100%" pointer-events="none"><g transform="translate(-642 -153)">
      <circle cx="667" cy="649" r="16" fill="none" stroke="#111" stroke-width="3" stroke-dasharray="5 5"/>
      <circle cx="667" cy="649" r="15" fill="#d8d8d8" stroke="#777"/><circle cx="667" cy="649" r="13.500" fill="#dedede" stroke="#fff" stroke-width="1.600"/>
      <path d="M648 634l7 0-3 6z" fill="#111"/>
      <path d="M959 380h8M971 380h8" stroke="#444" stroke-width="4"/><path d="M960 380h7M971 380h7" stroke="#fff" stroke-width="2"/>
      <path d="M966 373v15l4-3 3 7 4-2-3-6h5z" fill="#fff" stroke="#333"/>
    </g></svg>`;
  }
}

/* ---------- Task bar ---------- */

@customElement("task-bar")
class TaskBar extends LitElement {
  static styles = [shared, css`
    :host { display: flex; align-items: center; height: 24px; flex: none; background: linear-gradient(#76797e, #2a2d31 35%, #08090b 50%, #000); color: #f0f0f0; font: 10px/14px Roboto, sans-serif; position: relative; z-index: 2; }
    .orb { width: 46px; height: 24px; display: flex; justify-content: center; align-items: center; }
    .orb svg { flex: none; }
    .quick { display: flex; gap: 4px; margin-left: 18px; width: 216px; }
    .tasks { display: flex; gap: 3px; }
    .task { width: 125px; height: 23px; display: flex; align-items: center; gap: 5px; padding-left: 4px; border: 1px solid #555; border-radius: 2px; background: linear-gradient(#6c7075, #33363a 48%, #101214 50%, #1c1e20); overflow: hidden; }
    .task.on { background: linear-gradient(#333, #000 50%); }
    .tray { margin-left: auto; display: flex; align-items: center; gap: 1px; padding-right: 13px; }
    .lang { margin-right: 8px; }
    .break { width: 4px; }
  `];
  render() {
    const quick = [
      svg`<path d="M3 15c0-8 8-12 14-12-1 5-4 6-8 6 4 1 3 4 0 6z" fill="#f0782c" stroke="#a43"/>`,
      svg`<path d="M1 3h18v14H1z" fill="#3c64a8" stroke="#bcd"/><path d="M6 6l8 5-5 4z" fill="#fff" stroke="none"/>`,
      svg`<circle cx="10" cy="10" r="9" fill="#f4c43c" stroke="#a70"/><path d="M4 10h12c0 8-12 8-12 0z" fill="#fff" stroke="#643"/><path d="M7 5v3M13 5v3" stroke-width="2"/>`,
      svg`<path d="M2 2h16v16H2z" fill="#e8a43c" stroke="#fc8"/><circle cx="10" cy="10" r="6" fill="#5ca4dc" stroke="none"/><path d="M8 6l6 4-6 4z" fill="#fff" stroke="none"/>`,
      svg`<path d="M1 4h18v12H1z" fill="#3c70c0" stroke="#bcd"/><path d="M6 18h8" stroke="#bcd" stroke-width="2"/>`,
      svg`<circle cx="10" cy="10" r="9" fill="#3ca064" stroke="#cfc"/><path d="M6 5v5c0 5 7 5 7 0V5M13 10c0 3 1 4 4 3" stroke="#fff" stroke-width="2.400"/>`,
      svg`<path d="M1 1h18v18H1z" fill="#5cc04c" stroke="none"/><path d="M4 3v14M8 3v14M12 3v14M16 3v14M4 9l4-4M12 11l4-5" stroke="#fff" stroke-width="1.800"/>`,
      svg`<circle cx="10" cy="10" r="8.500" fill="#e8642c" stroke="#a31"/><circle cx="11" cy="8" r="4.500" fill="#3c5ca8" stroke="none"/>`,
      svg`<path d="M15 14a6.500 6.500 0 1 1 1.500-4H5" stroke="#6cc0f4" stroke-width="3"/><path d="M2 17C0 12 12 1 18 3" stroke="#f4d43c" stroke-width="1.600"/>`,
      svg`<circle cx="10" cy="10" r="8.500" fill="#4c9cd0" stroke="#cef"/><path d="M10 3v14M3 10h14M5 5l10 10M15 5L5 15" stroke="#e8f6ff" stroke-width="1.600"/>`,
    ];
    const cam = svg`<path d="M1 1h18v18H1z" fill="#5c9c3c" stroke="#cec"/><path d="M4 4l5 5M16 16l-5-5M16 4l-5 5M5 15h5v-5" stroke="#fff" stroke-width="2.400"/>`;
    const chrome = svg`<g stroke="none"><path d="M10 1a9 9 0 0 1 8 5h-8L6 12 2 6a9 9 0 0 1 8-5z" fill="#e0402c"/><path d="M2 6l4 7 4 2-2 4A9 9 0 0 1 2 6z" fill="#3ca04c"/><path d="M18 6a9 9 0 0 1-10 13l5-7V6z" fill="#f4cc34"/></g><circle cx="10" cy="10" r="3.500" fill="#3c78dc" stroke="#fff"/>`;
    const rhino = svg`<path d="M2 1l6 6 9-5-2 9-6 8-2-7-5-2z" fill="#eee" stroke="#999"/>`;
    const tray = [
      svg`<path d="M2 6l8-4 8 4-3 4 3 4-8 4-8-4 3-4z" fill="#6cb4e4" stroke="#cef"/>`, quick[5],
      svg`<circle cx="10" cy="10" r="9" fill="#3cb4d4" stroke="#cef"/><circle cx="10" cy="10" r="5" fill="#fff" stroke="none"/><circle cx="11" cy="10" r="2" fill="#246" stroke="none"/>`,
      svg`<circle cx="9" cy="8" r="7" fill="#e8a43c" stroke="#fd9"/><path d="M9 10h9v9H9z" fill="#fc6"/>`,
      svg`<path d="M2 2h16v12l-4 4H2z" fill="#c8c8e8" stroke="#eee"/><path d="M5 6h10M5 10h8" stroke="#558"/>`,
      svg`<path d="M4 3h5v15H4zM12 6h5v12h-5z" fill="#dfd" stroke="#fff"/><path d="M6 6v8" stroke="#373" stroke-width="2"/>`,
      svg`<path d="M2 3h12v9H2z" fill="#3c78c0" stroke="#cef"/><path d="M8 9h11v8H8z" fill="#2c60a8" stroke="#cef"/>`,
      svg`<path d="M2 7h4l6-5v16l-6-5H2z" fill="#eee" stroke="none"/><path d="M14 7c2 2 2 4 0 6M17 5c3 3 3 7 0 10" stroke="#eee"/>`,
    ];
    return html`
      <button class="orb" aria-label="Start"><svg width="32" height="32" viewBox="0 0 32 32"><circle cx="16" cy="16" r="15" fill="#1c4668" stroke="#7ca0b8"/><ellipse cx="16" cy="9" rx="12" ry="7" fill="#8cb4cc" opacity=".6"/><g transform="rotate(6 16 16)"><path d="M8 10c3-2 5-2 7-1v6c-2-1-4-1-7 1z" fill="#e8602c"/><path d="M17 9c2 1 4 1 7 0v6c-3 1-5 1-7 0z" fill="#8cc43c"/><path d="M8 18c3-2 5-2 7-1v6c-2-1-4-1-7 1z" fill="#4c9ce4"/><path d="M17 17c2 1 4 1 7 0v6c-3 1-5 1-7 0z" fill="#f4cc34"/></g></svg></button>
      <div class="quick">${quick.map((q) => icon(q, 14))}</div>
      <div class="tasks">
        <button class="task">${icon(chrome, 13)}RhinoCommon SDK...</button>
        <button class="task on">${icon(rhino, 13)}Untitled - Rhinocero...</button>
        <button class="task">${icon(cam, 12)}Camtasia Studio - U...</button>
        <button class="task">${icon(cam, 12)}Recording...</button>
      </div>
      <div class="tray"><span class="lang">EN</span>${icon(svg`<path d="M12 5l-6 5 6 5" stroke="#fff" stroke-width="3"/>`, 10)}${tray.map((t, i) => html`${i === 5 ? html`<span class="break"></span>` : ""}${icon(t, 14)}`)}<span class="break"></span><span>4:26 PM</span></div>`;
  }
}

@customElement("app-root")
class AppRoot extends LitElement {
  static styles = css`
    :host { display: flex; flex-direction: column; height: 100vh; position: relative; overflow: hidden; }
    .desk { flex: 1; min-height: 0; display: grid; grid-template-columns: minmax(0, 636fr) minmax(0, 516fr); grid-template-rows: minmax(0, 1fr); }
    .caption { position: absolute; inset: auto 0 84px 0; margin: 0; z-index: 3; text-align: center; font: bold 38px/44px "Liberation Sans", sans-serif; color: #000; opacity: .58; white-space: nowrap; pointer-events: none; }
  `;
  render() {
    return html`<main class="desk"><rhino-window></rhino-window><grasshopper-window></grasshopper-window></main>
      <task-bar></task-bar>
      <p class="caption">Look at Your Configurative Ideas from Different View Points</p>`;
  }
}
